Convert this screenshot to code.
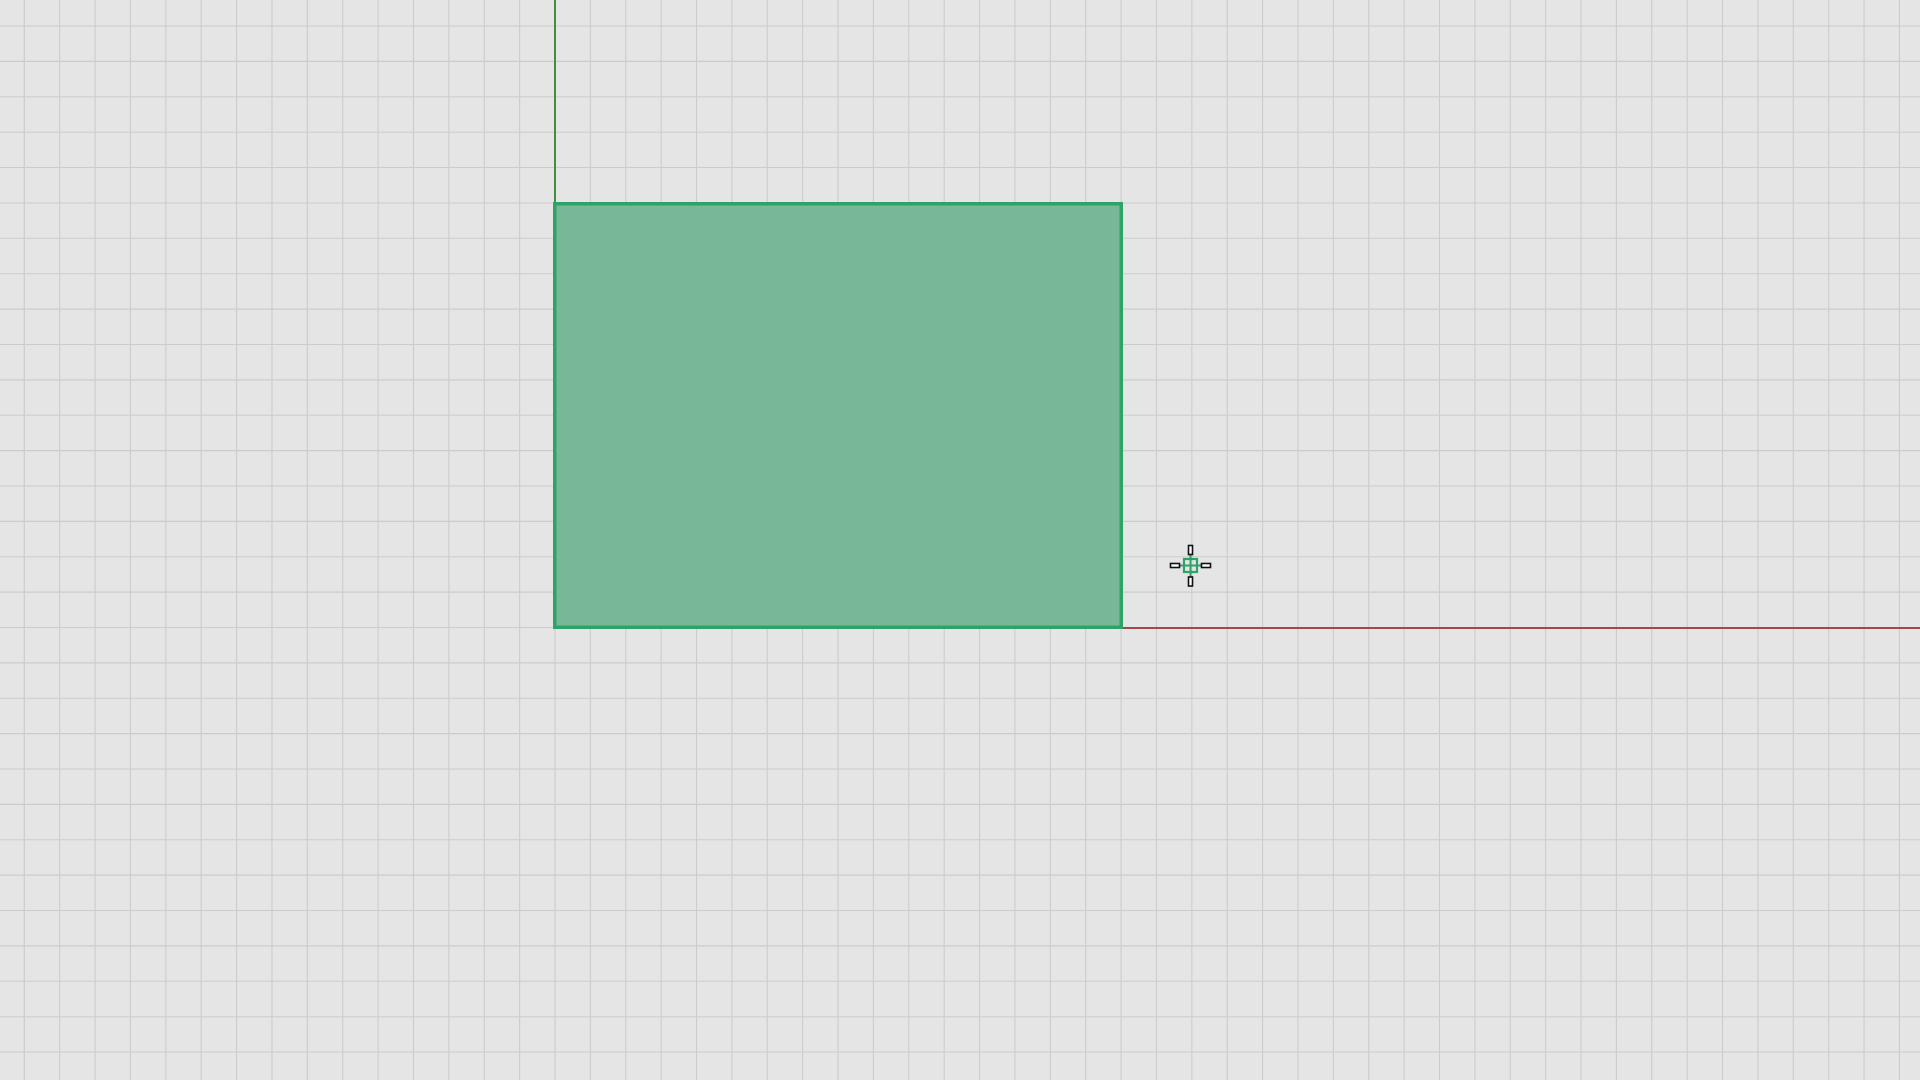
import React from 'react';

// Grid geometry of the drawing view (origin sits at the corner of the rectangle)
const STEP = 35.38;
const ORIGIN_X = 555;
const ORIGIN_Y = 627.5;
const W = 1920;
const H = 1080;

const gridXs: number[] = [];
for (let k = -16; ORIGIN_X + k * STEP < W; k++) {
  const x = ORIGIN_X + k * STEP;
  if (x > 0) gridXs.push(x);
}
const gridYs: number[] = [];
for (let k = -18; ORIGIN_Y + k * STEP < H; k++) {
  const y = ORIGIN_Y + k * STEP;
  if (y > 0) gridYs.push(y);
}

const Handle: React.FC<{ x: number; y: number; w: number; h: number }> = ({ x, y, w, h }) => (
  <rect x={x} y={y} width={w} height={h} fill="#ffffff" stroke="#111111" strokeWidth={1.6} />
);

const CursorGizmo: React.FC<{ cx: number; cy: number }> = ({ cx, cy }) => (
  <g>
    {/* centre square with cross */}
    <line x1={cx} y1={cy - 12} x2={cx} y2={cy + 12} stroke="#2ea368" strokeWidth={2} />
    <line x1={cx - 12} y1={cy} x2={cx + 12} y2={cy} stroke="#2ea368" strokeWidth={2} />
    <rect x={cx - 6.5} y={cy - 6.5} width={13} height={13} fill="none" stroke="#2ea368" strokeWidth={2.2} />
    {/* drag handles */}
    <Handle x={cx - 2} y={cy - 20} w={4} h={9} />
    <Handle x={cx - 2} y={cy + 11.5} w={4} h={9} />
    <Handle x={cx - 20} y={cy - 2} w={9} h={4} />
    <Handle x={cx + 11} y={cy - 2} w={9} h={4} />
  </g>
);

export default function App() {
  return (
    <div className="w-[1920px] h-[1080px] overflow-hidden bg-[#e5e5e5]">
      <svg width={W} height={H} viewBox={`0 0 ${W} ${H}`} className="block">
        <rect x={0} y={0} width={W} height={H} fill="#e5e5e5" />

        {/* grid */}
        {gridXs.map((x) => (
          <line key={`vx${x}`} x1={x} y1={0} x2={x} y2={H} stroke="#cccccc" strokeWidth={1.1} />
        ))}
        {gridYs.map((y) => (
          <line key={`hy${y}`} x1={0} y1={y} x2={W} y2={y} stroke="#cccccc" strokeWidth={1.1} />
        ))}

        {/* axes */}
        <line x1={ORIGIN_X} y1={0} x2={ORIGIN_X} y2={203} stroke="#3f8f3c" strokeWidth={2} />
        <line x1={1122} y1={ORIGIN_Y + 0.5} x2={W} y2={ORIGIN_Y + 0.5} stroke="#a34747" strokeWidth={2} />

        {/* selected rectangle */}
        <rect
          x={554.75}
          y={203.75}
          width={566.5}
          height={423.5}
          fill="#78b798"
          stroke="#2ea368"
          strokeWidth={3.5}
        />

        <CursorGizmo cx={1190.5} cy={565.5} />
      </svg>
    </div>
  );
}
